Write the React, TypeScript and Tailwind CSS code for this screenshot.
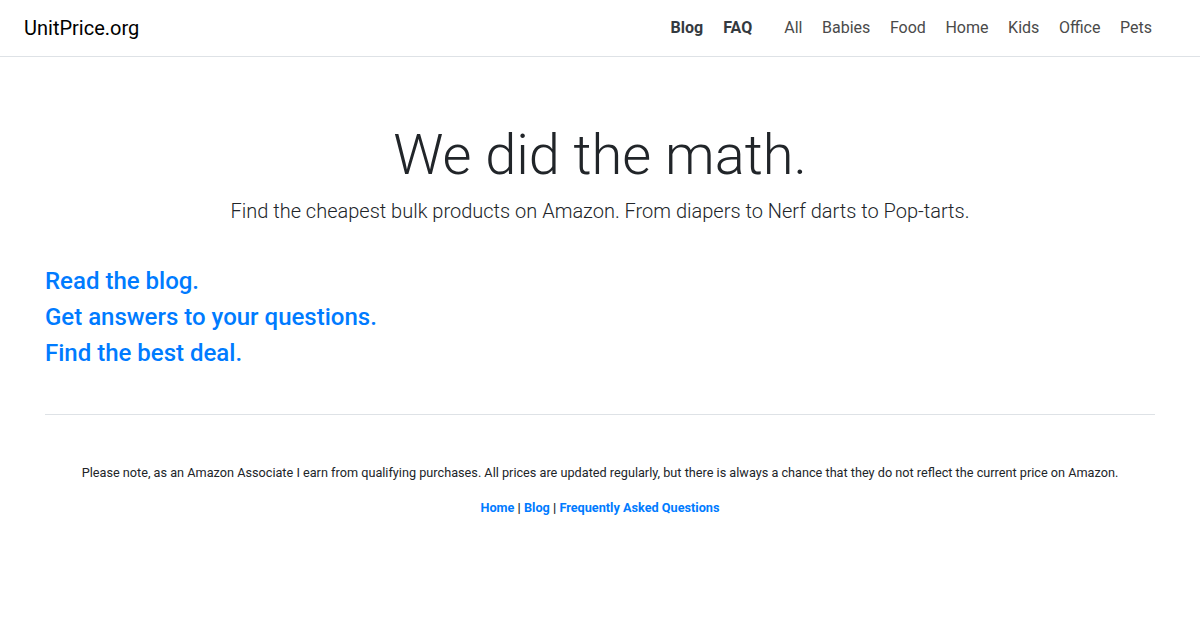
export default function App() {
  const cats = ['All', 'Babies', 'Food', 'Home', 'Kids', 'Office', 'Pets'];

  return (
    <div className="min-h-screen bg-white text-[#212529]" style={{ fontFamily: 'Roboto, "Noto Sans", sans-serif' }}>
      <header className="h-[57px] border-b border-[#dee2e6] flex items-center pl-6 pr-[48px]">
        <a href="#" className="text-[20px] text-black leading-none">UnitPrice.org</a>
        <nav className="ml-auto flex items-center text-[16px]">
          <div className="flex gap-5 font-bold text-[#343a40]">
            <a href="#">Blog</a>
            <a href="#">FAQ</a>
          </div>
          <div className="flex gap-[19.6px] ml-8 text-[#4a4a4a]">
            {cats.map((c) => (
              <a key={c} href="#">{c}</a>
            ))}
          </div>
        </nav>
      </header>

      <main className="max-w-[1140px] mx-auto px-[15px]">
        <section className="text-center pt-[65px]">
          <h1 className="text-[56px] font-light leading-[1.2]">We did the math.</h1>
          <p className="text-[20px] font-light mt-[7px]">
            Find the cheapest bulk products on Amazon. From diapers to Nerf darts to Pop-tarts.
          </p>
        </section>

        <section className="mt-[41px] flex flex-col gap-[7px] text-[24px] font-medium leading-[1.2] text-[#007bff]">
          <a href="#">Read the blog.</a>
          <a href="#">Get answers to your questions.</a>
          <a href="#">Find the best deal.</a>
        </section>

        <hr className="mt-[46px] border-t border-[#dee2e6]" />

        <footer className="text-center text-[12.7px] pt-[48px]">
          <p>
            Please note, as an Amazon Associate I earn from qualifying purchases. All prices are updated regularly, but there is always a chance that they do not reflect the current price on Amazon.
          </p>
          <p className="mt-[16px] font-bold">
            <a href="#" className="text-[#007bff]">Home</a> | <a href="#" className="text-[#007bff]">Blog</a> | <a href="#" className="text-[#007bff]">Frequently Asked Questions</a>
          </p>
        </footer>
      </main>
    </div>
  );
}
